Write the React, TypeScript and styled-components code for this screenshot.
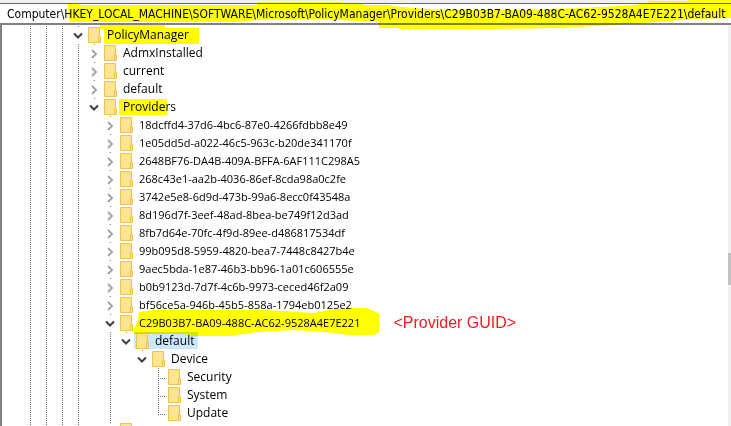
import React from "react";
import styled, { createGlobalStyle, css } from "styled-components";

const GlobalStyle = createGlobalStyle`
  * { box-sizing: border-box; }
  body { margin: 0; background: #fff; color: #000; font: 12px/18px "Open Sans", "Noto Sans", sans-serif; }
`;

const dots = "repeating-linear-gradient(to bottom, #777 0 1px, transparent 1px 2px)";

const Window = styled.main`
  display: flex;
  flex-direction: column;
  height: 100vh;
  overflow: hidden;
  padding-top: 3px;
  background: #f0f0f0;
`;

const AddressBar = styled.div`
  position: relative;
  z-index: 1;
  flex: none;
  background: #fff;
  border-top: 1px solid #69696f;
  border-bottom: 2px solid #828087;
`;

const AddressInput = styled.input`
  display: block;
  width: 100%;
  height: 19px;
  padding: 0 0 0 7px;
  border: 0;
  outline: 0;
  background: transparent;
  color: inherit;
  font: 12px/18px "DejaVu Sans Condensed", "DejaVu Sans", sans-serif;
`;

const Marker = styled.svg<{ $x: number; $y: number }>`
  position: absolute;
  left: ${(p) => p.$x}px;
  top: ${(p) => p.$y}px;
  overflow: visible;
  pointer-events: none;
  mix-blend-mode: multiply;
  fill: #ff0;
`;

const Body = styled.div`
  display: flex;
  flex: 1;
  min-height: 0;
`;

const Tree = styled.ul`
  flex: 1;
  min-width: 0;
  margin: 0;
  padding: 1px 0 0 20px;
  overflow: hidden;
  list-style: none;
  background: #fff;
  border-left: 2px solid #828087;
`;

const Row = styled.li`
  display: flex;
  height: 18px;
  white-space: nowrap;
`;

const Guide = styled.span<{ $kind: "line" | "blank" | "branch" | "end" }>`
  flex: none;
  width: 16px;
  height: 18px;
  background-repeat: no-repeat;
  ${(p) =>
    p.$kind !== "blank" &&
    css`
      background-image: ${dots}${p.$kind === "line" ? "" : ", repeating-linear-gradient(to right, #777 0 1px, transparent 1px 2px)"};
      background-position: 8px 0, 8px 10px;
      background-size: 1px ${p.$kind === "end" ? 11 : 18}px, 8px 1px;
    `}
`;

const Toggle = styled.button<{ $open: boolean }>`
  flex: none;
  width: 16px;
  height: 18px;
  padding: 0;
  border: 0;
  color: ${(p) => (p.$open ? "#404040" : "#a6a6a6")};
  background: ${dots} 8px 0 / 1px 2px no-repeat;

  svg {
    display: block;
    fill: none;
    stroke: currentColor;
    stroke-width: 2;
  }
`;

const Item = styled.span<{ $selected: boolean }>`
  display: flex;
  align-items: center;
  gap: 6px;
  height: 17px;
  padding: 0 4px 0 2px;
  background: ${(p) => (p.$selected ? "#cce8ff" : "transparent")};
`;

const FolderSvg = styled.svg`
  display: block;
  flex: none;
`;

const Label = styled.span<{ $guid: boolean }>`
  position: relative;
  font-size: ${(p) => (p.$guid ? 11 : 12)}px;
`;

const Note = styled.span`
  margin-left: 29px;
  color: #ed1c24;
  font: 16px/18px "Liberation Sans", Arial, sans-serif;
`;

const ScrollTrack = styled.div`
  display: flex;
  flex-direction: column;
  flex: none;
  width: 3px;
`;

const Space = styled.span<{ $grow: number }>`
  flex: ${(p) => p.$grow} 0 0;
`;

const Thumb = styled.span`
  flex: 32 0 0;
  background: #c2c2c2;
`;

function Folder() {
  return (
    <FolderSvg width="13" height="16" viewBox="0 0 13 16" aria-hidden="true">
      <path d="M.5.5h11v15H.5z" fill="#ffe391" stroke="#ecc44f" />
      <path d="M10.5 9.5h2v6h-2z" fill="#ffe391" stroke="#ecc44f" />
    </FolderSvg>
  );
}

type Mark = { x: number; y: number; d: string };
type Node = {
  name: string;
  guides: string;
  state?: "open" | "closed";
  guid?: boolean;
  selected?: boolean;
  note?: string;
  mark?: Mark;
};

const guids = [
  "18dcffd4-37d6-4bc6-87e0-4266fdbb8e49",
  "1e05dd5d-a022-46c5-963c-b20de341170f",
  "2648BF76-DA4B-409A-BFFA-6AF111C298A5",
  "268c43e1-aa2b-4036-86ef-8cda98a0c2fe",
  "3742e5e8-6d9d-473b-99a6-8ecc0f43548a",
  "8d196d7f-3eef-48ad-8bea-be749f12d3ad",
  "8fb7d64e-70fc-4f9d-89ee-d486817534df",
  "99b095d8-5959-4820-bea7-7448c8427b4e",
  "9aec5bda-1e87-46b3-bb96-1a01c606555e",
  "b0b9123d-7d7f-4c6b-9973-ceced46f2a09",
  "bf56ce5a-946b-45b5-858a-1794eb0125e2",
];

// Guide codes: | line, . blank, + branch, L last branch
const nodes: Node[] = [
  { name: "PolicyManager", guides: "|||", state: "open", mark: { x: -3, y: 0, d: "M-4-1H61V2H95V18H0V3H-4z" } },
  { name: "AdmxInstalled", guides: "||||", state: "closed" },
  { name: "current", guides: "||||", state: "closed" },
  { name: "default", guides: "||||", state: "closed" },
  { name: "Providers", guides: "||||", state: "open", mark: { x: -4, y: 0, d: "M0 1H48V17H0z" } },
  ...guids.map((name): Node => ({ name, guides: "||||.", state: "closed", guid: true })),
  {
    name: "C29B03B7-BA09-488C-AC62-9528A4E7E221",
    guides: "||||.",
    state: "open",
    guid: true,
    note: "<Provider GUID>",
    mark: {
      x: -5,
      y: 0,
      d: "M5-2 20-4H90L130-4 165-2 180-1 195-4 220-6H232L240-3 245 0V18L240 21H215L190 18 160 16 125 18 95 22H60L50 20H0V14L3 9z",
    },
  },
  { name: "default", guides: "||||.|", state: "open", selected: true },
  { name: "Device", guides: "||||.|.", state: "open" },
  { name: "Security", guides: "||||.|..+" },
  { name: "System", guides: "||||.|..+" },
  { name: "Update", guides: "||||.|..L" },
  { name: "", guides: "||||.", state: "closed" },
];

const kinds = { "|": "line", ".": "blank", "+": "branch", L: "end" } as const;

function Highlight({ mark }: { mark: Mark }) {
  return (
    <Marker $x={mark.x} $y={mark.y} width="1" height="1" aria-hidden="true">
      <path d={mark.d} />
    </Marker>
  );
}

function TreeRow({ node }: { node: Node }) {
  return (
    <Row role="treeitem" aria-level={node.guides.length} aria-selected={!!node.selected}>
      {[...node.guides].map((g, i) => (
        <Guide key={i} $kind={kinds[g as keyof typeof kinds]} />
      ))}
      {node.state && (
        <Toggle type="button" $open={node.state === "open"} aria-label={`Toggle ${node.name}`}>
          <svg width="16" height="18" viewBox="0 0 16 18">
            <path d={node.state === "open" ? "M4 7.5l4 4 4-4" : "M6 6l4 4-4 4"} />
          </svg>
        </Toggle>
      )}
      <Item $selected={!!node.selected}>
        <Folder />
        <Label $guid={!!node.guid}>
          {node.name}
          {node.mark && <Highlight mark={node.mark} />}
        </Label>
      </Item>
      {node.note && <Note>{node.note}</Note>}
    </Row>
  );
}

const addressMark: Mark = {
  x: 68,
  y: -4,
  d: "M0 4H10L12 5H189V2H274V4H295V5H319L334 7 372 10H459L477 9 515 8 566 5 581 3V1H621V0H663V18L621 19 591 22 544 25 529 26 489 28 422 29H331V28H311V22L291 21 271 20 241 19 186 20 172 22H2L0 15z",
};

export default function App() {
  return (
    <>
      <GlobalStyle />
      <Window>
        <AddressBar>
          <AddressInput
            aria-label="Address"
            spellCheck={false}
            defaultValue="Computer\HKEY_LOCAL_MACHINE\SOFTWARE\Microsoft\PolicyManager\Providers\C29B03B7-BA09-488C-AC62-9528A4E7E221\default"
          />
          <Highlight mark={addressMark} />
        </AddressBar>
        <Body>
          <Tree role="tree" aria-label="Registry keys">
            {nodes.map((node, i) => (
              <TreeRow key={i} node={node} />
            ))}
          </Tree>
          <ScrollTrack aria-hidden="true">
            <Space $grow={228} />
            <Thumb />
            <Space $grow={141} />
          </ScrollTrack>
        </Body>
      </Window>
    </>
  );
}
